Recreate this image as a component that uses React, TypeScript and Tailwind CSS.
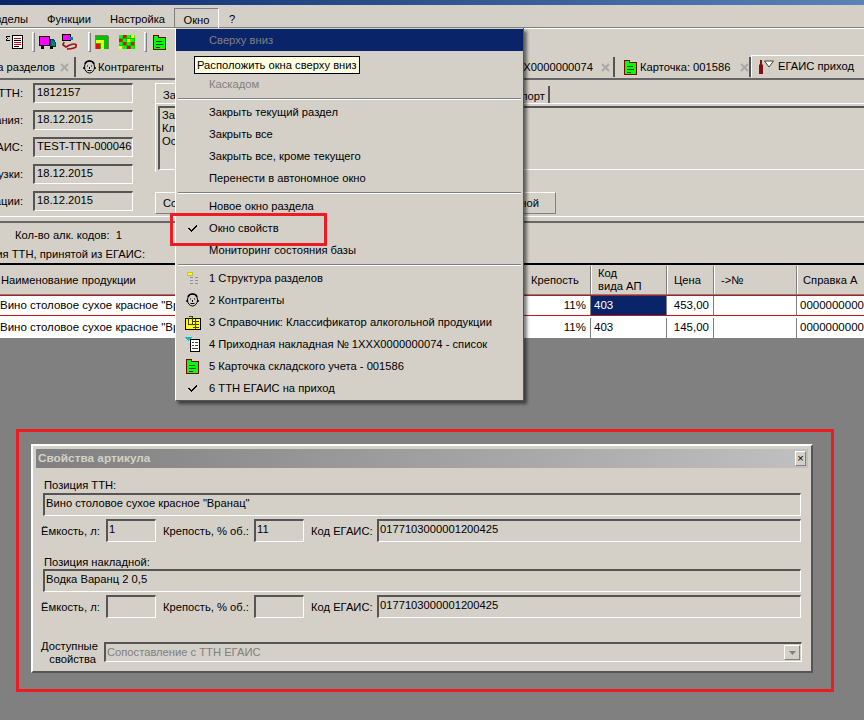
const raised = "border border-t-white border-l-white border-r-[#808080] border-b-[#808080]";
const sunken = "border-t-2 border-l-2 border-r border-b border-t-[#555] border-l-[#555] border-r-white border-b-white";

function CloseX() {
  return (
    <svg width="9" height="9" viewBox="0 0 9 9" className="shrink-0">
      <path d="M1 1L8 8M8 1L1 8" stroke="#a8a8a8" strokeWidth="2" />
    </svg>
  );
}

function Check() {
  return (
    <svg width="9" height="7" viewBox="0 0 9 7" shapeRendering="crispEdges">
      <path d="M0 3h2v1h1v1h1V4h1V3h1V2h1V1h1V0h1v2H8v1H7v1H6v1H5v1H4v1H3V6H2V5H1V4H0z" fill="#000" />
    </svg>
  );
}

function Face() {
  return (
    <svg width="15" height="15" viewBox="0 0 15 15" className="shrink-0">
      <ellipse cx="7.5" cy="7" rx="5" ry="6" fill="#d4d0c8" stroke="#000" />
      <path d="M3 4c1-4 8-4 9 0" fill="none" stroke="#000" strokeWidth="1.6" />
      <path d="M2 7v2M13 7v2" stroke="#000" strokeWidth="1.5" />
      <path d="M5 6h1M9 6h1M7.5 7v2M5.5 10.5h4" stroke="#000" />
    </svg>
  );
}

function GreenFolder() {
  return (
    <svg width="13" height="15" viewBox="0 0 13 15" shapeRendering="crispEdges" className="shrink-0">
      <path d="M.5 .5h5v2h7v12H.5z" fill="#00ff00" stroke="#800000" />
      <path d="M3 6h6v1H3zM3 9h7v1H3zM3 12h4v1H3z" fill="#004000" />
    </svg>
  );
}

function SumDoc() {
  return (
    <svg width="18" height="15" viewBox="0 0 18 15" shapeRendering="crispEdges">
      <path d="M1 1h4v1H2v1h1v1H2v1h3v1H1V4h1V3H1z" fill="#000" />
      <rect x="7.5" y=".5" width="10" height="13" fill="#fff" stroke="#000" />
      <path d="M9 3h7v1H9zM9 7h7v1H9zM9 9h7v1H9z" fill="#d00000" />
      <path d="M9 5h7v1H9zM9 11h5v1H9z" fill="#000" />
    </svg>
  );
}

function Truck() {
  return (
    <svg width="17" height="15" viewBox="0 0 17 15" shapeRendering="crispEdges">
      <rect x=".5" y="1.5" width="10" height="9" fill="#ff00ff" stroke="#000" />
      <path d="M11 4h3l2 3v4h-5z" fill="#008080" stroke="#004040" />
      <rect x="2" y="11" width="3" height="3" fill="#000" />
      <rect x="11" y="11" width="3" height="3" fill="#000" />
    </svg>
  );
}

function RouteIcon() {
  return (
    <svg width="17" height="17" viewBox="0 0 17 17">
      <rect x="1.5" y=".5" width="8" height="6" fill="#ff00ff" stroke="#000" />
      <rect x="9" y="3" width="3" height="3" fill="#008080" />
      <path d="M3 8l-1 3 3 2c3-2 5-3 8-3 3 0 3 3 0 4-3 1-5 1-7 1" fill="none" stroke="#a01010" strokeWidth="1.7" />
    </svg>
  );
}

function GreenCorner() {
  return (
    <svg width="14" height="14" viewBox="0 0 14 14" shapeRendering="crispEdges">
      <path d="M0 0h12l2 2v12H0z" fill="#808060" />
      <path d="M1 1h11l1 1v12H1z" fill="#00c000" />
      <path d="M1 5h8v9H6V8H1z" fill="#ffff00" />
      <rect x="1" y="9" width="4" height="5" fill="#ff0000" />
    </svg>
  );
}

function ColorGrid() {
  const colors = ["#00ff00", "#ff0000", "#00ff00", "#ffff00", "#ff0000", "#00ff00", "#ffff00", "#00ff00", "#00ff00", "#ff0000", "#00ff00", "#ff0000", "#ffff00", "#00ff00", "#ff0000", "#00ff00"];
  return (
    <div className="grid grid-cols-4 w-[16px] h-[14px] bg-[#00c000]">
      {colors.map((c, i) => (
        <svg key={i} width="4" height="3.5" viewBox="0 0 4 3.5">
          <rect width="3.4" height="3" fill={c} />
        </svg>
      ))}
    </div>
  );
}

function TreeIcon() {
  return (
    <svg width="13" height="13" viewBox="0 0 13 13" shapeRendering="crispEdges">
      <rect x="1" y="0" width="5" height="3" fill="#ffff00" stroke="#a0a000" strokeWidth=".5" />
      <path d="M4 5h3v1H4zM9 5h3v1H9zM4 8h3v1H4zM9 8h3v1H9zM4 11h3v1H4zM9 11h3v1H9z" fill="#9090a0" />
    </svg>
  );
}

function BookIcon() {
  return (
    <svg width="16" height="15" viewBox="0 0 16 15" shapeRendering="crispEdges">
      <rect x=".5" y="3.5" width="15" height="11" fill="#ffff00" stroke="#000" />
      <path d="M8 6h6v1H8zM8 9h6v1H8zM8 12h6v1H8zM10 4h1v10h-1z" fill="#404000" />
      <path d="M4 1h3v8H3V3" fill="none" stroke="#404000" />
    </svg>
  );
}

function ListDocIcon() {
  return (
    <svg width="15" height="15" viewBox="0 0 15 15" shapeRendering="crispEdges">
      <path d="M0 0h7L3 4z" fill="#00c0d0" />
      <rect x="5.5" y="2.5" width="9" height="12" fill="#fff" stroke="#000" />
      <path d="M7 5h2v1H7zM10 5h3v1h-3zM7 8h2v1H7zM10 8h3v1h-3zM7 11h6v1H7z" fill="#404040" />
    </svg>
  );
}

function BottleIcon() {
  return (
    <svg width="18" height="14" viewBox="0 0 18 14" className="shrink-0">
      <path d="M2 0h2v4l1 1v9H1V5l1-1z" fill="#801010" />
      <path d="M6.5 1h9L11 7z" fill="#fff" stroke="#404040" />
      <path d="M11 7v5M7.5 13h7" stroke="#c8c8c8" />
    </svg>
  );
}

function Tab({ w, active, children }: { w: string; active?: boolean; children: React.ReactNode }) {
  return (
    <div className={`${w} flex items-center shrink-0 whitespace-nowrap overflow-hidden ${active ? "h-[22px] border-t border-l border-white" : "h-[20px] mt-[2px] border-r-2 border-r-[#555]"}`}>
      {children}
    </div>
  );
}

const formRows = [
  { label: "Номер ТТН:", value: "1812157" },
  { label: "Дата создания:", value: "18.12.2015" },
  { label: "Номер ЕГАИС:", value: "TEST-TTN-0000463" },
  { label: "Дата погрузки:", value: "18.12.2015" },
  { label: "Дата фиксации:", value: "18.12.2015" },
];

const windowMenu: { text?: string; disabled?: boolean; active?: boolean; checked?: boolean; icon?: React.ReactNode; sep?: boolean }[] = [
  { text: "Сверху вниз", disabled: true, active: true },
  { text: "Слева направо" },
  { text: "Каскадом", disabled: true },
  { sep: true },
  { text: "Закрыть текущий раздел" },
  { text: "Закрыть все" },
  { text: "Закрыть все, кроме текущего" },
  { text: "Перенести в автономное окно" },
  { sep: true },
  { text: "Новое окно раздела" },
  { text: "Окно свойств", checked: true },
  { text: "Мониторинг состояния базы" },
  { sep: true },
  { text: "1 Структура разделов", icon: <TreeIcon /> },
  { text: "2 Контрагенты", icon: <Face /> },
  { text: "3 Справочник: Классификатор алкогольной продукции", icon: <BookIcon /> },
  { text: "4 Приходная накладная № 1XXX0000000074 - список", icon: <ListDocIcon /> },
  { text: "5 Карточка складского учета - 001586", icon: <GreenFolder /> },
  { text: "6 ТТН ЕГАИС на приход", checked: true },
];

function Field({ w, children }: { w: string; children?: React.ReactNode }) {
  return <div className={`${w} h-[23px] shrink-0 pl-[1px] leading-[16px] whitespace-nowrap overflow-hidden ${sunken}`}>{children}</div>;
}

function ParamRow({ cap, proof, code }: { cap: string; proof: string; code: string }) {
  return (
    <div className="flex items-center mt-[3px]">
      <span className="w-[65px] shrink-0 pt-[1px]">Ёмкость, л:</span>
      <Field w="w-[50px]">{cap}</Field>
      <span className="w-[98px] shrink-0 pl-[7px] pt-[1px]">Крепость, % об.:</span>
      <Field w="w-[50px]">{proof}</Field>
      <span className="w-[73px] shrink-0 pl-[7px] pt-[1px]">Код ЕГАИС:</span>
      <Field w="w-[424px]">{code}</Field>
    </div>
  );
}

function PropertiesWindow() {
  return (
    <div className="w-[782px] h-[229px] ml-[31px] border-2 border-t-white border-l-white border-r-[#555] border-b-[#555] p-[3px] bg-[#d4d0c8]">
      <div className="h-[19px] pl-[2px] pr-[2px] flex items-center justify-between bg-linear-to-r from-[#808080] to-[#c0c0c0]">
        <span className="font-bold text-[11.8px] text-[#d4d0c8]">Свойства артикула</span>
        <div className={`w-[11px] h-[15px] flex items-center justify-center text-[11px] leading-none bg-[#d4d0c8] ${raised}`}>×</div>
      </div>
      <div className="px-[5px]">
        <div className="h-[25px] pl-[3px] pt-[9px] leading-[16px]">Позиция ТТН:</div>
        <div className="ml-[2px]">
          <Field w="w-[758px]">Вино столовое сухое красное "Вранац"</Field>
        </div>
        <ParamRow cap="1" proof="11" code="0177103000001200425" />
        <div className="h-[27px] pl-[3px] pt-[12px] leading-[16px]">Позиция накладной:</div>
        <div className="ml-[2px]">
          <Field w="w-[758px]">Водка Варанц 2 0,5</Field>
        </div>
        <ParamRow cap="" proof="" code="0177103000001200425" />
        <div className="flex mt-[24px]">
          <div className="w-[55px] shrink-0 text-right leading-[13px] -mt-[2px]">
            Доступные
            <br />
            свойства
          </div>
          <div className={`ml-[8px] w-[698px] h-[20px] flex items-center justify-between pl-[1px] pr-[1px] text-[#808080] ${sunken}`}>
            <span>Сопоставление с ТТН ЕГАИС</span>
            <div className={`w-[16px] h-[15px] flex items-center justify-center bg-[#d4d0c8] ${raised}`}>
              <svg width="7" height="4" viewBox="0 0 7 4">
                <path d="M0 0h7L3.5 4z" fill="#808080" />
              </svg>
            </div>
          </div>
        </div>
      </div>
    </div>
  );
}

export default function App() {
  return (
    <div className="relative w-[864px] h-[720px] overflow-hidden flex flex-col bg-[#d4d0c8] text-black text-[11.2px] font-['Liberation_Sans',sans-serif]">
      <div className="h-[5px] shrink-0 bg-linear-to-r from-[#0a246a] to-[#5d82b8]" />

      {/* menu bar */}
      <div className="h-[23px] shrink-0 flex items-start border-b border-b-[#808080]">
        <span className="w-[47px] shrink-0 flex justify-end overflow-hidden pr-[19px] pt-[6px] whitespace-nowrap">Разделы</span>
        <span className="w-[63px] shrink-0 pt-[6px]">Функции</span>
        <span className="w-[64px] shrink-0 pt-[6px]">Настройка</span>
        <span className="w-[45px] h-[20px] mt-[3px] shrink-0 pt-[3px] text-center border-t border-l border-r border-t-[#808080] border-l-[#808080] border-r-white">Окно</span>
        <span className="ml-[10px] pt-[6px]">?</span>
      </div>

      {/* toolbar */}
      <div className="h-[27px] shrink-0 flex items-center pl-[5px] border-t border-t-white">
        <SumDoc />
        <div className={`ml-[9px] w-[3px] h-[20px] ${raised}`} />
        <div className="ml-[4px]"><Truck /></div>
        <div className="ml-[5px]"><RouteIcon /></div>
        <div className={`ml-[10px] w-[3px] h-[20px] ${raised}`} />
        <div className="ml-[4px]"><GreenCorner /></div>
        <div className="ml-[10px]"><ColorGrid /></div>
        <div className={`ml-[9px] w-[3px] h-[20px] ${raised}`} />
        <div className="ml-[6px]"><GreenFolder /></div>
      </div>

      {/* open sections */}
      <div className="h-[25px] shrink-0 flex items-start border-b-2 border-b-[#666]">
        <Tab w="w-[76px] justify-end pr-[5px] gap-[5px]">
          <span>Структура разделов</span>
          <CloseX />
        </Tab>
        <Tab w="w-[442px] pl-[6px] gap-[1px]">
          <Face />
          <span>Контрагенты</span>
        </Tab>
        <Tab w="w-[97px] justify-end pr-[3px] gap-[8px]">
          <span>1XXX0000000074</span>
          <CloseX />
        </Tab>
        <Tab w="w-[136px] pl-[9px] gap-[3px]">
          <GreenFolder />
          <span>Карточка: 001586</span>
          <span className="ml-[7px]"><CloseX /></span>
        </Tab>
        <Tab active w="w-[113px] pl-[6px] gap-[2px]">
          <BottleIcon />
          <span>ЕГАИС приход</span>
          <span className="ml-[8px]"><CloseX /></span>
        </Tab>
      </div>

      {/* document head */}
      <div className="h-[137px] shrink-0 flex border-b border-b-white">
        <div className="w-[155px] shrink-0 pt-[3px] flex flex-col gap-[7px]">
          {formRows.map((row) => (
            <div key={row.value + row.label} className="flex items-center h-[20px]">
              <span className="w-[33px] shrink-0 flex justify-end overflow-hidden whitespace-nowrap pr-[10px]">{row.label}</span>
              <div className={`w-[100px] h-[20px] pl-[2px] leading-[15px] overflow-hidden whitespace-nowrap ${sunken}`}>{row.value}</div>
            </div>
          ))}
        </div>
        <div className="flex-1 flex flex-col pt-[3px]">
          <div className="h-[21px] flex items-end">
            <div className="w-[300px] h-[21px] pl-[7px] pt-[3px] border-t border-l border-white">Заголовок</div>
            <div className="w-[95px] h-[18px] pl-[36px] pt-[2px] border-r-2 border-r-[#555]">Транспорт</div>
          </div>
          <div className="h-[69px] border-t border-l border-white pl-[2px] pt-[2px] -mt-[1px]">
            <div className={`h-[64px] pl-[2px] pt-[1px] leading-[13px] -mr-[1px] ${sunken}`}>
              Заголовок
              <br />
              Клиент
              <br />
              Основание
            </div>
          </div>
          <div className="flex mt-[20px] items-start">
            <div className={`w-[180px] h-[22px] pl-[7px] flex items-center ${raised}`}>Сопоставить</div>
            <div className={`ml-[66px] w-[155px] h-[22px] flex items-center justify-end pr-[16px] ${raised}`}>Сопоставить с накладной</div>
          </div>
        </div>
      </div>

      {/* counters */}
      <div className="h-[44px] shrink-0 mt-[4px] border-t-2 border-t-[#666] border-b-2 border-b-black">
        <div className="pl-[15px] pt-[5px] leading-[14px] whitespace-pre">Кол-во алк. кодов:  1</div>
        <div className="w-[145px] flex justify-end overflow-hidden whitespace-nowrap pt-[5px] leading-[14px]">Дата создания ТТН, принятой из ЕГАИС:</div>
      </div>

      {/* positions grid */}
      <div className="h-[29px] shrink-0 flex items-center mt-[1px] border-b border-b-[#808080]">
        <div className="w-[526px] shrink-0 pl-[1px]">Наименование продукции</div>
        <div className="w-[65px] shrink-0 h-full flex items-center pl-[5px] border-r border-r-[#808080]">Крепость</div>
        <div className="w-[76px] shrink-0 h-full flex items-center pl-[6px] leading-[13px] border-r border-r-[#808080] border-l border-l-white">
          <span>
            Код
            <br />
            вида АП
          </span>
        </div>
        <div className="w-[47px] shrink-0 h-full flex items-center pl-[6px] border-r border-r-[#808080] border-l border-l-white">Цена</div>
        <div className="w-[83px] shrink-0 h-full flex items-center pl-[6px] border-r border-r-[#808080] border-l border-l-white">-&gt;№</div>
        <div className="flex-1 h-full flex items-center pl-[5px] whitespace-nowrap border-l border-l-white">Справка А</div>
      </div>
      {[
        { price: "453,00", current: true },
        { price: "145,00", current: false },
      ].map((row) => (
        <div
          key={row.price}
          className={`shrink-0 flex bg-white text-[11.5px] ${row.current ? "h-[21px] border-y border-y-[#c01818]" : "h-[22px] pt-[2px]"}`}
        >
          <div className="w-[526px] shrink-0 flex items-center whitespace-nowrap">Вино столовое сухое красное "Вранац"</div>
          <div className="w-[65px] shrink-0 flex items-center justify-end pr-[4px] border-r border-r-[#808080]">11%</div>
          <div className={`w-[76px] shrink-0 flex items-center pl-[3px] border-r border-r-[#808080] ${row.current ? "bg-[#0a246a] text-white" : ""}`}>403</div>
          <div className="w-[47px] shrink-0 flex items-center justify-end pr-[4px] border-r border-r-[#808080]">{row.price}</div>
          <div className="w-[83px] shrink-0 border-r border-r-[#808080]" />
          <div className="flex-1 flex items-center pl-[3px] overflow-hidden whitespace-nowrap">000000000000000</div>
        </div>
      ))}

      {/* workspace */}
      <div className="flex-1 bg-[#808080] pt-[106px]">
        <PropertiesWindow />
      </div>

      {/* open "Окно" menu */}
      <div className="absolute left-[175px] top-[28px] w-[349px] pt-[1px] pb-[1px] bg-[#d4d0c8] border-l border-l-white border-r border-r-[#555] border-b border-b-[#555] shadow-[3px_3px_3px_rgba(0,0,0,0.5)]">
        {windowMenu.map((item, i) =>
          item.sep ? (
            <div key={i} className="h-[6px] pt-[3px]">
              <div className="h-[2px] mx-[2px] border-t border-t-[#808080] border-b border-b-white" />
            </div>
          ) : (
            <div key={i} className={`h-[22px] flex items-center whitespace-nowrap ${item.active ? "bg-[#0a246a]" : ""} ${item.disabled ? "text-[#808080]" : ""}`}>
              <div className="w-[33px] shrink-0 flex items-center justify-center">
                {item.checked ? <Check /> : item.icon}
              </div>
              {item.text}
            </div>
          )
        )}
      </div>

      {/* tooltip */}
      <div className="absolute left-[194px] top-[56px] h-[18px] px-[2px] flex items-center whitespace-nowrap bg-[#ffffe1] border border-black">
        Расположить окна сверху вниз
      </div>

      {/* red annotations */}
      <div className="absolute left-[170px] top-[213px] w-[157px] h-[33px] border-[3px] border-[#ed1c24]" />
      <div className="absolute left-[16px] top-[429px] w-[818px] h-[263px] border-[3px] border-[#ed1c24]" />
    </div>
  );
}
